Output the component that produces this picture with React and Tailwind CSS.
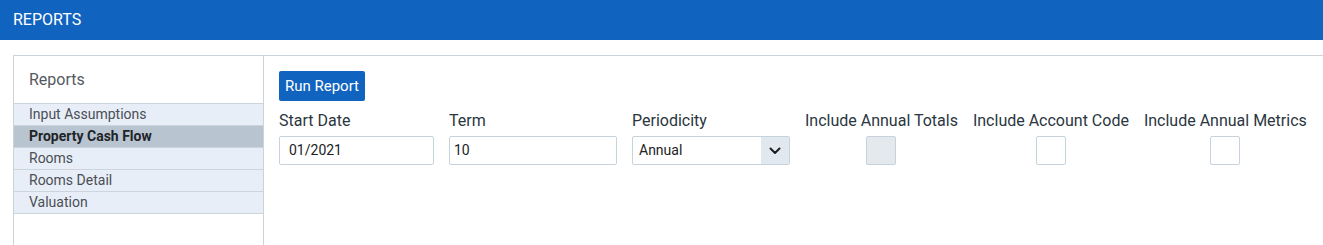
import React from "react";

const reports = [
    "Input Assumptions",
    "Property Cash Flow",
    "Rooms",
    "Rooms Detail",
    "Valuation",
];

function Checkbox({ disabled }) {
    return (
        <div
            className={
                "w-[30px] h-[29px] rounded-[2px] border border-[#c6d3dc] " +
                (disabled ? "bg-[#e3e9ed]" : "bg-white")
            }
        />
    );
}

export default function App() {
    const active = "Property Cash Flow";

    return (
        <div
            className="w-[1323px] h-[245px] bg-white overflow-hidden"
            style={{ fontFamily: "Roboto, 'Liberation Sans', sans-serif" }}
        >
            <div className="h-[40px] bg-[#1163c0] px-[13px] flex items-center">
                <span className="text-white text-[16px]">REPORTS</span>
            </div>

            <div className="mt-[15px] ml-[13px] border-t border-[#ccd4d9] flex h-[190px]">
                <div className="w-[251px] border-l border-r border-[#ccd4d9] shrink-0">
                    <div className="h-[48px] flex items-center pl-[15px] text-[16px] text-[#555a60] border-b border-[#ccd4dc]">
                        Reports
                    </div>
                    {reports.map((r) => (
                        <div
                            key={r}
                            className={
                                "h-[22px] flex items-center pl-[15px] text-[14px] border-b border-[#ccd4dc] " +
                                (r === active
                                    ? "bg-[#b8c4d0] font-bold text-[#1f2429]"
                                    : "bg-[#e8eef7] text-[#4a4f55]")
                            }
                        >
                            {r}
                        </div>
                    ))}
                </div>

                <div className="pl-[15px] pt-[15px]">
                    <button className="h-[30px] w-[86px] bg-[#1163c0] text-white text-[15px] rounded-[2px] flex items-center justify-center">
                        Run Report
                    </button>

                    <div className="flex mt-[10px] gap-[15px] text-[16px] text-[#2b3640]">
                        <div className="w-[155px]">
                            <div className="h-[20px] leading-[20px]">Start Date</div>
                            <div className="mt-[5px] h-[29px] border border-[#c6d3dc] rounded-[2px] flex items-center pl-[9px] text-[14px] text-[#222]">
                                01/2021
                            </div>
                        </div>
                        <div className="w-[168px]">
                            <div className="h-[20px] leading-[20px]">Term</div>
                            <div className="mt-[5px] h-[29px] border border-[#c6d3dc] rounded-[2px] flex items-center pl-[4px] text-[14px] text-[#222]">
                                10
                            </div>
                        </div>
                        <div className="w-[158px]">
                            <div className="h-[20px] leading-[20px]">Periodicity</div>
                            <div className="mt-[5px] h-[29px] border border-[#c6d3dc] rounded-[2px] flex text-[14px] text-[#222] overflow-hidden">
                                <div className="flex-1 flex items-center pl-[6px]">Annual</div>
                                <div className="w-[28px] bg-[#e2e8ef] flex items-center justify-center">
                                    <svg width="12" height="8" viewBox="0 0 12 8" fill="none">
                                        <path
                                            d="M1.5 1.5 L6 6 L10.5 1.5"
                                            stroke="#1a1f24"
                                            strokeWidth="2"
                                            strokeLinecap="round"
                                            strokeLinejoin="round"
                                        />
                                    </svg>
                                </div>
                            </div>
                        </div>
                        <div className="flex flex-col items-center">
                            <div className="h-[20px] leading-[20px] whitespace-nowrap">Include Annual Totals</div>
                            <div className="mt-[5px]">
                                <Checkbox disabled />
                            </div>
                        </div>
                        <div className="flex flex-col items-center">
                            <div className="h-[20px] leading-[20px] whitespace-nowrap">Include Account Code</div>
                            <div className="mt-[5px]">
                                <Checkbox />
                            </div>
                        </div>
                        <div className="flex flex-col items-center">
                            <div className="h-[20px] leading-[20px] whitespace-nowrap">Include Annual Metrics</div>
                            <div className="mt-[5px]">
                                <Checkbox />
                            </div>
                        </div>
                    </div>
                </div>
            </div>
        </div>
    );
}
